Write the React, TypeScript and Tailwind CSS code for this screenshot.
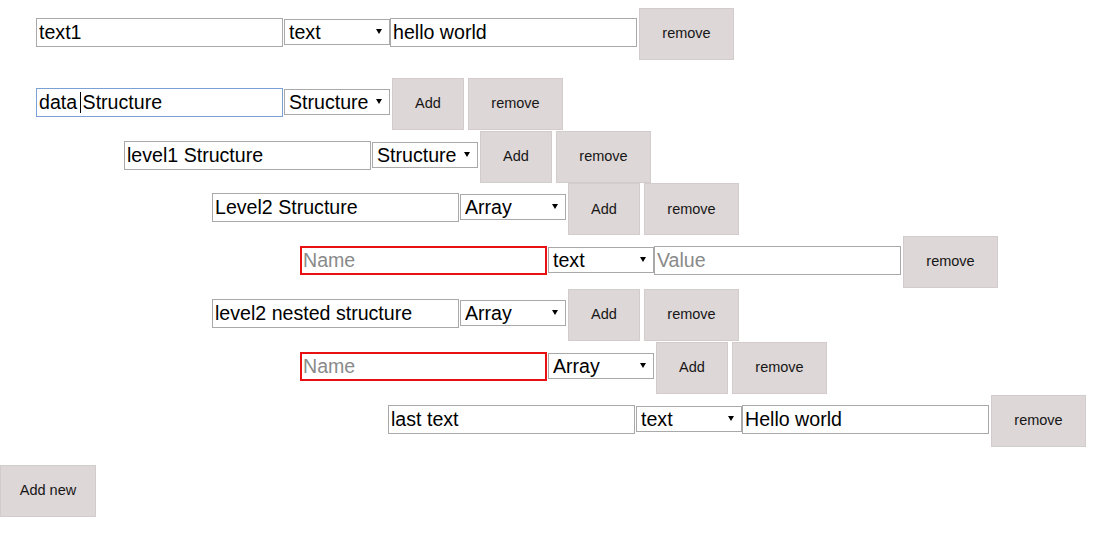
import React from "react"

const font = { fontFamily: '"Liberation Sans", Arial, sans-serif' }

type Row =
  | { kind: "text"; indent: number; name: string; type: string; value: string; invalid?: boolean }
  | { kind: "struct"; indent: number; name: string; type: string; invalid?: boolean; focused?: boolean }

const rows: Row[] = [
  { kind: "struct", indent: 0, name: "data Structure", type: "Structure", focused: true },
  { kind: "struct", indent: 1, name: "level1 Structure", type: "Structure" },
  { kind: "struct", indent: 2, name: "Level2 Structure", type: "Array" },
  { kind: "text", indent: 3, name: "", type: "text", value: "", invalid: true },
  { kind: "struct", indent: 2, name: "level2 nested structure", type: "Array" },
  { kind: "struct", indent: 3, name: "", type: "Array", invalid: true },
  { kind: "text", indent: 4, name: "last text", type: "text", value: "Hello world" },
]

const indents = ["ml-[36px]", "ml-[124px]", "ml-[212px]", "ml-[300px]", "ml-[388px]"]

function Field({
  value,
  placeholder,
  invalid,
  focused,
}: {
  value: string
  placeholder: string
  invalid?: boolean
  focused?: boolean
}) {
  const border = invalid
    ? "border-2 border-[#e81010] px-[1px]"
    : focused
      ? "border border-[#7aa0d6] px-[2px]"
      : "border border-[#a9a9a9] px-[2px]"
  return (
    <div className="relative mt-[10px] shrink-0">
      <input
        readOnly
        value={value}
        placeholder={placeholder}
        className={`block h-[29px] w-[247px] bg-white text-[19.6px] leading-[25px] text-black outline-none placeholder:text-[#8a8a8a] ${border}`}
        style={font}
      />
      {focused && <span className="absolute left-[44px] top-[4px] h-[21px] w-px bg-black" />}
    </div>
  )
}

function TypeSelect({ value }: { value: string }) {
  return (
    <div className="relative ml-[1px] mt-[11px] shrink-0">
      <select
        value={value}
        onChange={() => {}}
        className="block h-[26px] w-[106px] appearance-none rounded-none border border-[#a9a9a9] bg-white pl-[4px] text-[19.6px] leading-[22px] text-black outline-none"
        style={font}
      >
        <option>text</option>
        <option>Structure</option>
        <option>Array</option>
      </select>
      <svg className="pointer-events-none absolute right-[8px] top-[10px]" width="6" height="5" viewBox="0 0 6 5">
        <path d="M0 0h6L3 5z" fill="#000" />
      </svg>
    </div>
  )
}

function Btn({ label, w, cls = "" }: { label: string; w: string; cls?: string }) {
  return (
    <button
      className={`h-[52px] shrink-0 border border-[#d3cccc] bg-[#ded7d7] text-[14.5px] text-[#161616] ${w} ${cls}`}
      style={font}
    >
      {label}
    </button>
  )
}

function RowView({ row }: { row: Row }) {
  return (
    <div className={`flex h-[52.84px] items-start ${indents[row.indent]}`}>
      <Field value={row.name} placeholder="Name" invalid={row.invalid} focused={row.kind === "struct" && row.focused} />
      <TypeSelect value={row.type} />
      {row.kind === "text" ? (
        <>
          <Field value={row.value} placeholder="Value" />
          <Btn label="remove" w="w-[95px]" cls="ml-[2px]" />
        </>
      ) : (
        <>
          <Btn label="Add" w="w-[72px]" cls="ml-[2px]" />
          <Btn label="remove" w="w-[95px]" cls="ml-[4px]" />
        </>
      )}
    </div>
  )
}

export default function App() {
  return (
    <div className="min-h-[555px] w-[1098px] bg-white pt-[8px]" style={font}>
      <RowView row={{ kind: "text", indent: 0, name: "text1", type: "text", value: "hello world" }} />

      <div className="mt-[17px]">
        {rows.map((r, i) => (
          <RowView key={i} row={r} />
        ))}
      </div>

      <div className="mt-[17px]">
        <Btn label="Add new" w="w-[96px]" />
      </div>
    </div>
  )
}
